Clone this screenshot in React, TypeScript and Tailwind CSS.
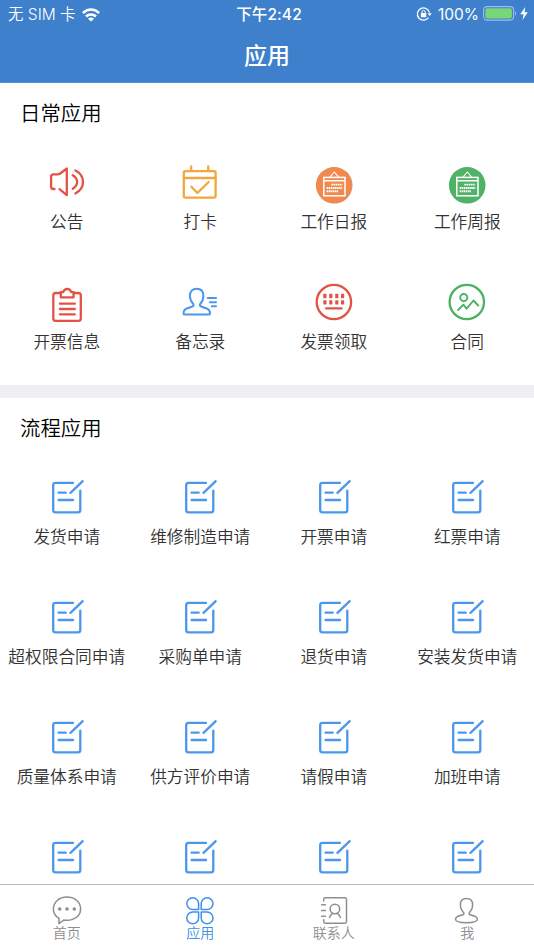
import React from "react";

type IconProps = { className?: string };

// 44x44 canvas shared by all grid icons
function AppIcon({ color, children }: { color: string; children: React.ReactNode }) {
  return (
    <svg
      className="w-11 h-11 shrink-0"
      viewBox="0 0 44 44"
      fill="none"
      stroke={color}
      strokeWidth="2.3"
      strokeLinecap="round"
      strokeLinejoin="round"
    >
      {children}
    </svg>
  );
}

function NoticeIcon() {
  return (
    <AppIcon color="#e25345">
      <path d="M9.5 27H8.3Q6.1 27 6.1 24.8V14.7Q6.1 12.3 8.5 12.3H12.3Q14.1 12.3 15.6 11.2L21.8 6.5V33.2L14.5 27.2" />
      <path d="M27.7 13.3C30.7 15.1 32.1 17.3 32.1 20C32.1 22.9 30.7 25.1 27.7 26.8" />
      <path d="M30.4 8.4C35.4 11 38 15 38 20C38 25 35.4 28.8 30.4 31.5" />
    </AppIcon>
  );
}

function PunchIcon() {
  return (
    <AppIcon color="#f2a73d">
      <rect x="5.8" y="9.1" width="31.8" height="26.5" rx="1.6" />
      <path d="M5.8 16H37.6M13.2 4.4V8.5M30.2 4.4V8.5" />
      <path d="M13.4 24.7L19.4 31L30.6 20" />
    </AppIcon>
  );
}

function ReportIcon({ color }: { color: string }) {
  return (
    <AppIcon color="#ffffff">
      <circle cx="22.2" cy="23.3" r="18.3" fill={color} stroke="none" />
      <g strokeWidth="1.5" strokeLinejoin="miter">
        <rect x="11.8" y="15.4" width="21.2" height="18.4" />
        <path d="M13 18.7H32" />
        <path d="M18.2 14.8L22.3 10L26.4 14.8" strokeWidth="1.1" />
      </g>
      <g strokeWidth="1.9" strokeLinecap="butt" strokeDasharray="1.6 0.5">
        <path d="M19.3 22.6H30.3M14.6 26H30.3M14.6 29.3H26" />
      </g>
    </AppIcon>
  );
}

function InvoiceInfoIcon() {
  return (
    <AppIcon color="#e25345">
      <path d="M15.5 11H10.7Q8.3 11 8.3 13.4V36.5Q8.3 38.9 10.7 38.9H33.4Q35.8 38.9 35.8 36.5V13.4Q35.8 11 33.4 11H28.8" />
      <path d="M15.8 10.2H18.1Q19.3 7 22.2 7T26.3 10.2H28.6V15.3H15.8Z" />
      <path d="M14.9 21.7H29.8M14.9 27H29.8M14.9 32.3H29.8" />
    </AppIcon>
  );
}

function MemoIcon() {
  return (
    <AppIcon color="#4b96ee">
      <g strokeWidth="2">
        <path d="M18.7 6.8C14.5 6.8 11.9 9.6 11.9 14C11.9 17.2 13.2 19.8 15.3 22C16.1 23.2 15.5 24 14.3 24.5L8.3 26.7C6.2 27.6 5.5 29.6 5.5 31.4Q5.5 32.6 7 32.6H30.5Q32 32.6 32 31.4C32 29.4 31.1 27.6 29.2 26.7L23.2 24.5C21.9 24 21.4 23.2 22.2 22C24.3 19.6 25.4 17.2 25.4 14C25.4 9.6 22.9 6.8 18.7 6.8Z" />
        <path d="M29.8 16H38M31.8 20.3H38M33.8 24.3H38" />
      </g>
    </AppIcon>
  );
}

function ReceiveIcon() {
  return (
    <AppIcon color="#e25345">
      <circle cx="21.9" cy="20" r="17.2" />
      {[12.9, 18.8, 24.8, 30.6].map((x) => (
        <g key={x} fill="#e25345" stroke="none">
          <rect x={x - 1.6} y="11.8" width="3.2" height="4.4" rx="0.6" />
          <rect x={x - 1.6} y="18.2" width="3.2" height="4.4" rx="0.6" />
        </g>
      ))}
      <path d="M14.2 26.4H29.6" />
    </AppIcon>
  );
}

function ContractIcon() {
  return (
    <AppIcon color="#4bb163">
      <circle cx="21.8" cy="20" r="17.2" />
      <circle cx="18.8" cy="15.6" r="3.6" strokeWidth="1.9" />
      <path strokeWidth="1.9" d="M13.1 28L18.4 22.7L21.6 26.7L28.5 18.5L33.2 23.5" />
    </AppIcon>
  );
}

function FormIcon() {
  return (
    <AppIcon color="#4b96ee">
      <path d="M28 5.9H10.6Q8.2 5.9 8.2 8.2V32.9Q8.2 35.3 10.6 35.3H32.9Q35.3 35.3 35.3 32.9V13.6" />
      <path d="M37.7 4.2L25.5 15.9M13.6 15.7H20.7M13.6 23H28.1" />
    </AppIcon>
  );
}

function TabIcon({ children, className }: IconProps & { children: React.ReactNode }) {
  return (
    <svg
      className={`w-9 h-9 shrink-0 ${className ?? ""}`}
      viewBox="0 0 36 36"
      fill="none"
      stroke="currentColor"
      strokeWidth="1.5"
      strokeLinecap="round"
      strokeLinejoin="round"
    >
      {children}
    </svg>
  );
}

const dailyApps = [
  { label: "公告", icon: <NoticeIcon /> },
  { label: "打卡", icon: <PunchIcon /> },
  { label: "工作日报", icon: <ReportIcon color="#ef8950" /> },
  { label: "工作周报", icon: <ReportIcon color="#4fb266" /> },
  { label: "开票信息", icon: <InvoiceInfoIcon /> },
  { label: "备忘录", icon: <MemoIcon /> },
  { label: "发票领取", icon: <ReceiveIcon /> },
  { label: "合同", icon: <ContractIcon /> },
];

const flowApps = [
  "发货申请",
  "维修制造申请",
  "开票申请",
  "红票申请",
  "超权限合同申请",
  "采购单申请",
  "退货申请",
  "安装发货申请",
  "质量体系申请",
  "供方评价申请",
  "请假申请",
  "加班申请",
  "",
  "",
  "",
  "",
].map((label) => ({ label, icon: <FormIcon /> }));

const tabs = [
  {
    label: "首页",
    icon: (
      <TabIcon>
        <path d="M10 31.6V26.4C6.5 24.3 4.4 20.9 4.4 17.2C4.4 10.4 10 5 18 5S31.6 10.4 31.6 16.9S26 28.3 18 28.3C16.8 28.3 15.8 28.2 14.8 28Z" />
        <g fill="currentColor" stroke="none">
          <circle cx="10.7" cy="17" r="1.8" />
          <circle cx="18" cy="17" r="1.8" />
          <circle cx="25.3" cy="17" r="1.8" />
        </g>
      </TabIcon>
    ),
  },
  {
    label: "应用",
    active: true,
    icon: (
      <TabIcon>
        <path d="M16.6 17.5H10.7A5.9 5.9 0 1 1 16.6 11.6Z" />
        <path d="M19.2 17.5H25.1A5.9 5.9 0 1 0 19.2 11.6Z" />
        <path d="M16.6 20H10.7A5.9 5.9 0 1 0 16.6 25.9Z" />
        <path d="M19.2 20H25.1A5.9 5.9 0 1 1 19.2 25.9Z" />
      </TabIcon>
    ),
  },
  {
    label: "联系人",
    icon: (
      <TabIcon>
        <path d="M7.7 9V7.3Q7.7 5.7 9.3 5.7H28.9Q30.5 5.7 30.5 7.3V29.6Q30.5 31.2 28.9 31.2H9.3Q7.7 31.2 7.7 29.6V27.8" />
        <path d="M5.7 12.7H9.4M5.7 18.5H9.4M5.7 24.3H9.4" />
        <circle cx="18.9" cy="17" r="4.8" />
        <path d="M13.5 25.5C14.2 23.4 15.3 22.2 16.8 21.4M21 21.4C22.5 22.2 23.7 23.4 24.4 25.5" />
      </TabIcon>
    ),
  },
  {
    label: "我",
    icon: (
      <TabIcon>
        <path d="M17.5 6.5C13.6 6.5 11.4 8.8 11.4 12.6C11.4 16 12.4 18.4 14.4 20.2C15.5 21.7 15 22.6 13.3 23.1C9 23.9 6.5 25.2 6.5 27.3C6.5 29.6 10.5 30.7 17.5 30.7S28.4 29.6 28.4 27.3C28.4 25.2 26 23.9 21.7 23.1C20 22.6 19.5 21.7 20.6 20.2C22.6 18.4 23.6 16 23.6 12.6C23.6 8.8 21.4 6.5 17.5 6.5Z" />
      </TabIcon>
    ),
  },
];

function StatusBar() {
  return (
    <div className="h-7 grid grid-cols-3 items-center leading-7 text-white">
      <div className="flex items-center gap-2 pl-2">
        <span className="whitespace-nowrap text-[15.5px] font-[350] pt-px">无 SIM 卡</span>
        <svg className="w-[18px] h-[14px] -ml-0.5" viewBox="0 0 18 14" fill="none" stroke="white" strokeWidth="2.5">
          <path d="M0.9 5.1C5.5 0.3 12.5 0.3 17.1 5.1M4 8.5C6.8 5.7 11.2 5.7 14 8.5" />
          <path d="M9 13.6L6 10.7C7.8 9.2 10.2 9.2 12 10.7Z" fill="white" stroke="none" />
        </svg>
      </div>
      <span className="text-center text-[15.5px] font-medium tracking-[0.1px] whitespace-nowrap pl-1">下午2:42</span>
      <div className="flex items-center justify-end pr-1.5">
        <svg className="w-4 h-4 mr-1.5 -mt-0.5" viewBox="0 0 16 16" fill="none" stroke="white" strokeWidth="1.3">
          <path d="M12.4 11.6A6.1 6.1 0 1 1 13.4 6.6" />
          <path d="M11.6 7.2H15.8L13.7 10Z" fill="white" stroke="none" />
          <rect x="4.9" y="7.1" width="5.4" height="4.1" rx="0.6" fill="white" stroke="none" />
          <path d="M6 7.2V6A1.6 1.6 0 0 1 9.2 6V7.200" strokeWidth="1" />
        </svg>
        <span className="text-[15.5px] mr-[3.5px]">100%</span>
        <svg className="w-[34px] h-[15px] mr-[3.5px] -mt-0.5" viewBox="0 0 34 15">
          <rect x="0.6" y="0.6" width="30" height="13.5" rx="3.5" fill="none" stroke="#9ebfe6" strokeWidth="1.1" />
          <rect x="2.3" y="2.3" width="26.6" height="10.1" rx="1.8" fill="#77d675" />
          <path d="M32 5.2C33.4 5.7 33.4 9 32 9.5Z" fill="#9ebfe6" />
        </svg>
        <svg className="w-2 h-[13px] -mt-0.5" viewBox="0 0 8 13">
          <path d="M5.3 0L0.2 7.3H3.5L2.5 13L7.8 5.2H4.5Z" fill="white" />
        </svg>
      </div>
    </div>
  );
}

function AppSection({ title, apps }: { title: string; apps: { label: string; icon: React.ReactNode }[] }) {
  return (
    <section className="bg-white shrink-0 pb-7">
      <h2 className="h-[60px] pl-5 text-[20.4px] leading-[62px] font-[350] text-black">{title}</h2>
      <div className="grid grid-cols-4 gap-y-[45px] pt-[19px]">
        {apps.map((app, i) => (
          <div key={i} className="h-[75px] flex flex-col items-center">
            {app.icon}
            <span className="text-[16.7px] leading-[33px] font-[350] text-[#333333] whitespace-nowrap">{app.label}</span>
          </div>
        ))}
      </div>
    </section>
  );
}

export default function App() {
  return (
    <div className="w-full h-screen flex flex-col overflow-hidden bg-white font-['Inter','Noto_Sans_CJK_SC',sans-serif]">
      {/* Header */}
      <header className="h-[83px] shrink-0 bg-[#3e80cc] border-b border-[#4f90dc]">
        <StatusBar />
        <h1 className="text-center text-[23px] leading-[56px] font-medium text-white">应用</h1>
      </header>

      {/* App lists */}
      <main className="flex-1 min-h-0 overflow-hidden flex flex-col">
        <AppSection title="日常应用" apps={dailyApps} />
        <div className="h-[13px] shrink-0 bg-[#eeeef3]" />
        <AppSection title="流程应用" apps={flowApps} />
      </main>

      {/* Bottom tabs */}
      <nav className="h-[66px] shrink-0 grid grid-cols-4 border-t border-[#b9b9b9] bg-white pt-[7px]">
        {tabs.map((tab) => (
          <div
            key={tab.label}
            className={`flex flex-col items-center ${tab.active ? "text-[#4090e8]" : "text-[#8e8e8e]"}`}
          >
            {tab.icon}
            <span className="-mt-1 text-[14px] leading-[18px] font-[350]">{tab.label}</span>
          </div>
        ))}
      </nav>
    </div>
  );
}
